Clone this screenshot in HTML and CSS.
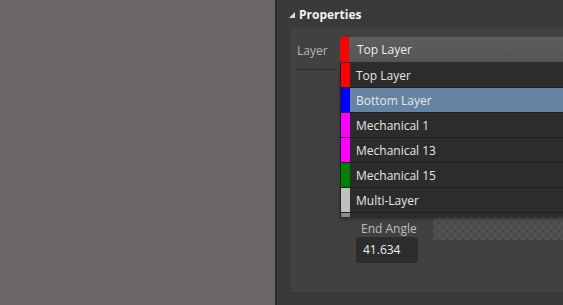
FILE: index.html
```html
<!DOCTYPE html>
<html>
<head>
<meta charset="utf-8">
<link rel="stylesheet" href="styles.css">
</head>
<body>
<div class="app">
  <div class="canvas"></div>
  <div class="sep"></div>
  <div class="panel">
    <div class="header">
      <svg class="tri" width="6" height="6" viewBox="0 0 6 6"><polygon points="6,0 6,6 0,6" fill="#d8d8d8"/></svg>
      <span>Properties</span>
    </div>
    <div class="group">
      <div class="row-layer">
        <div class="label-layer">Layer</div>
        <div class="combo-wrap">
          <div class="combo">
            <span class="strip strip-round" style="background:#ff0000"></span>
            <span class="combo-text">Top Layer</span>
          </div>
          <div class="list">
            <div class="item"><span class="strip" style="background:#ff0000"></span><span class="item-text">Top Layer</span></div>
            <div class="item selected"><span class="strip" style="background:#0000ff"></span><span class="item-text">Bottom Layer</span></div>
            <div class="item"><span class="strip" style="background:#ff00ff"></span><span class="item-text">Mechanical 1</span></div>
            <div class="item"><span class="strip" style="background:#ff00ff"></span><span class="item-text">Mechanical 13</span></div>
            <div class="item"><span class="strip" style="background:#008000"></span><span class="item-text">Mechanical 15</span></div>
            <div class="item"><span class="strip" style="background:#c0c0c0"></span><span class="item-text">Multi-Layer</span></div>
            <div class="item partial"><span class="strip" style="background:#8a8a8a"></span></div>
          </div>
        </div>
      </div>
      <div class="angle-row">
        <div class="angle-col">
          <div class="angle-label">End Angle</div>
          <div class="angle-input">41.634</div>
        </div>
        <div class="checker"></div>
      </div>
    </div>
  </div>
</div>
</body>
</html>
```
FILE: styles.css
```css
* { box-sizing: border-box; }
html, body { margin: 0; padding: 0; }
body {
  width: 563px;
  height: 305px;
  overflow: hidden;
  font-family: "Open Sans", "Noto Sans", sans-serif;
  background: #3b3b3b;
}
.app {
  display: flex;
  height: 305px;
}
.canvas {
  width: 275px;
  flex: none;
  background-color: #6b6867;
  background-image: radial-gradient(circle, rgba(150,150,180,0.25) 0.6px, transparent 1px);
  background-size: 8px 8px;
}
.sep {
  width: 2px;
  flex: none;
  background: #2c2c2c;
}
.panel {
  flex: 1;
  background: #3a3a3a;
  padding: 6px 0 0 12px;
  display: flex;
  flex-direction: column;
  min-width: 0;
}
.header {
  display: flex;
  align-items: center;
  gap: 4px;
  height: 16px;
  color: #f2f2f2;
  font-weight: 700;
  font-size: 12px;
}
.tri { margin-top: 1px; }
.group {
  margin-top: 6px;
  height: 265px;
  background: #414141;
  border-top: 1px solid #3d3d3d;
  border-left: 1px solid #393939;
  border-bottom: 1px solid #353535;
  padding: 8px 0 0 7px;
  display: flex;
  flex-direction: column;
}
.row-layer {
  display: flex;
  align-items: flex-start;
  height: 183px;
}
.label-layer {
  width: 40px;
  flex: none;
  height: 33px;
  color: #b8b8b8;
  font-size: 12px;
  padding-top: 5px;
  border-bottom: 1px solid #2a2a2a;
  margin-right: 3px;
}
.combo-wrap {
  position: relative;
  flex: 1;
}
.combo {
  display: flex;
  align-items: center;
  height: 26px;
  background: linear-gradient(#5e5e5e, #555555);
  border-radius: 4px 0 0 4px;
  border-bottom: 1px solid #333;
}
.strip {
  width: 9px;
  height: 100%;
  flex: none;
}
.strip-round { border-radius: 4px 0 0 4px; }
.combo-text {
  color: #ececec;
  font-size: 12px;
  margin-left: 8px;
}
.list {
  position: absolute;
  top: 26px;
  left: 0;
  right: 0;
  background: #2b2b2b;
  border-left: 1px solid #222;
  box-shadow: 0 2px 3px rgba(0,0,0,0.35);
}
.item {
  display: flex;
  align-items: center;
  height: 25px;
  background: #2c2c2c;
  border-bottom: 1px solid #202020;
}
.item.selected { background: #6584a3; }
.item.partial { height: 4px; border-bottom: 0; }
.item-text {
  color: #e6e6e6;
  font-size: 12px;
  margin-left: 6px;
}
.angle-row {
  display: flex;
  align-items: flex-start;
  padding-left: 59px;
}
.angle-col {
  display: flex;
  flex-direction: column;
  width: 62px;
}
.angle-label {
  color: #bdbdbd;
  font-size: 12px;
  padding-left: 5px;
  height: 17px;
}
.angle-input {
  height: 26px;
  background: #2d2d2d;
  border-radius: 3px;
  color: #f0f0f0;
  font-size: 12px;
  padding: 4px 0 0 7px;
}
.checker {
  flex: 1;
  margin-left: 15px;
  margin-top: -3px;
  height: 23px;
  background-color: #4a4a4a;
  background-image:
    linear-gradient(45deg, #525252 25%, transparent 25%, transparent 75%, #525252 75%),
    linear-gradient(45deg, #525252 25%, transparent 25%, transparent 75%, #525252 75%);
  background-size: 8px 8px;
  background-position: 0 0, 4px 4px;
}
```
